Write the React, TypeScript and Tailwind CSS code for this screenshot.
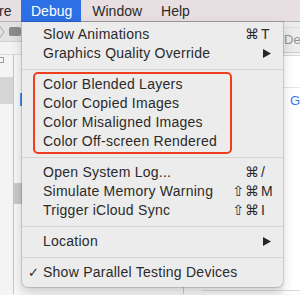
import React from 'react';

type Item =
  | { kind: 'item'; label: string; mods?: string; keyName?: string; submenu?: boolean; checked?: boolean }
  | { kind: 'sep' };

const items: Item[] = [
  { kind: 'item', label: 'Slow Animations', mods: '⌘', keyName: 'T' },
  { kind: 'item', label: 'Graphics Quality Override', submenu: true },
  { kind: 'sep' },
  { kind: 'item', label: 'Color Blended Layers' },
  { kind: 'item', label: 'Color Copied Images' },
  { kind: 'item', label: 'Color Misaligned Images' },
  { kind: 'item', label: 'Color Off-screen Rendered' },
  { kind: 'sep' },
  { kind: 'item', label: 'Open System Log...', mods: '⌘', keyName: '/' },
  { kind: 'item', label: 'Simulate Memory Warning', mods: '⇧⌘', keyName: 'M' },
  { kind: 'item', label: 'Trigger iCloud Sync', mods: '⇧⌘', keyName: 'I' },
  { kind: 'sep' },
  { kind: 'item', label: 'Location', submenu: true },
  { kind: 'sep' },
  { kind: 'item', label: 'Show Parallel Testing Devices', checked: true },
];

function SubmenuArrow() {
  return (
    <svg width="8" height="9" viewBox="0 0 8 9" className="ml-[2px]">
      <polygon points="0,0 8,4.5 0,9" fill="#262626" />
    </svg>
  );
}

export default function App() {
  return (
    <div
      className="relative w-[300px] h-[295px] overflow-hidden bg-[#f6f6f6] text-[14px] text-[#2a2a2a]"
      style={{ fontFamily: '"Liberation Sans", "DejaVu Sans", sans-serif' }}
    >
      {/* menu bar */}
      <div className="flex h-[22px] items-center bg-[#e7dfe1] border-b border-[#b9b0b6] leading-[22px]">
        <span className="w-[22px] -ml-[1px]">re</span>
        <span className="pl-[10px] pr-[9px] bg-[#2d6fe5] text-white">Debug</span>
        <span className="pl-[11px] pr-[9px]">Window</span>
        <span className="pl-[10px]">Help</span>
      </div>

      {/* window behind the menu */}
      <div className="flex h-[272px]">
        {/* left pane */}
        <div className="flex w-[22px] flex-col">
          <div className="flex h-[20px] items-center gap-[4px] bg-[#e3e1e1] border-b border-[#cfcfcf]">
            <svg width="5" height="12" viewBox="0 0 5 12">
              <polyline points="0,0.5 4,6 0,11.5" fill="none" stroke="#a8a8a8" strokeWidth="1" />
            </svg>
            <span className="h-[9px] w-[12px] rounded-[2px] bg-[#8a8a8a] blur-[0.6px]" />
          </div>
          <div className="h-[13px] border-b border-[#dcdcdc] bg-[#f3f3f3]" />
          <div className="flex flex-1">
            <div className="flex w-[14px] flex-col border-r border-[#c6c6c6] bg-[#f4f4f4]">
              <span className="mt-[2px] h-[6px] w-[4px] border border-[#9a9a9a] border-l-0" />
              <span className="mt-[14px] h-[27px] bg-[#d5d5d5]" />
            </div>
            <div className="flex flex-1 flex-col bg-[#f7f7f7]">
              <span className="ml-auto mt-[38px] h-[13px] w-[2px] bg-[#4a8fe0]" />
              <span className="mt-[77px] h-[21px] bg-[#c8c8c8]" />
            </div>
          </div>
        </div>

        {/* middle, only seen under the menu */}
        <div className="flex flex-1 items-end bg-[#f7f7f7]">
          <div className="flex h-[8px] w-full">
            <div className="w-[162px] border-r border-[#c9c9c9]" />
            <div className="flex-1 flex flex-col">
              <div className="h-[4px]" />
              <div className="ml-[18px] border-t border-[#dadada]" />
            </div>
          </div>
        </div>

        {/* right pane */}
        <div className="flex w-[17px] flex-col bg-white">
          <div className="h-[31px] bg-[#ececec] border-b border-[#cfcfcf]">
            <div className="mt-[5px] border-t border-[#dedede]" />
            <div className="pl-[1px] pt-[5px] text-[13px] leading-[14px] text-[#959595]">Der</div>
          </div>
          <div className="h-[3px] border-b border-[#d8d8d8] bg-[#f4f4f4]" />
          <div className="h-[32px] border-b border-[#e6e6e6]" />
          <div className="pl-[7px] pt-[6px] text-[13px] leading-[14px] text-[#3478f6]">G</div>
          <div className="flex-1" />
          <div className="mb-[3px] border-t border-[#d8d8d8]" />
        </div>
      </div>

      {/* the open Debug menu */}
      <div className="absolute left-[22px] top-[22px] w-[261px] rounded-b-[6px] bg-[#ececec] pt-[3px] pb-[5px] shadow-[0_0_0_1px_rgba(0,0,0,0.14),0_5px_12px_rgba(0,0,0,0.18)]">
        {items.map((it, i) =>
          it.kind === 'sep' ? (
            <div key={i} className="flex h-[12px] items-center">
              <div className="h-px w-full bg-[#d5d5d5]" />
            </div>
          ) : (
            <div key={i} className="flex h-[19px] items-center pl-[6px] pr-[6px] leading-[19px]">
              <span
                className="w-[15px] text-[13px]"
                style={{ fontFamily: '"DejaVu Sans", sans-serif' }}
              >
                {it.checked ? '✓' : ''}
              </span>
              <span className="flex-1 whitespace-nowrap tracking-[0.25px]">{it.label}</span>
              {(it.keyName || it.submenu) && (
                <span className="flex items-center">
                  {it.mods && (
                    <span
                      className="pr-[1px] text-[14px] tracking-[1px]"
                      style={{ fontFamily: '"DejaVu Sans", sans-serif' }}
                    >
                      {it.mods}
                    </span>
                  )}
                  <span className="flex w-[16px] items-center">
                    {it.submenu ? <SubmenuArrow /> : it.keyName}
                  </span>
                </span>
              )}
            </div>
          )
        )}

        {/* red highlight annotation */}
        <div className="absolute left-[11px] top-[50px] h-[82px] w-[199px] rounded-[5px] border-2 border-[#ef3e1d]" />
      </div>
    </div>
  );
}
